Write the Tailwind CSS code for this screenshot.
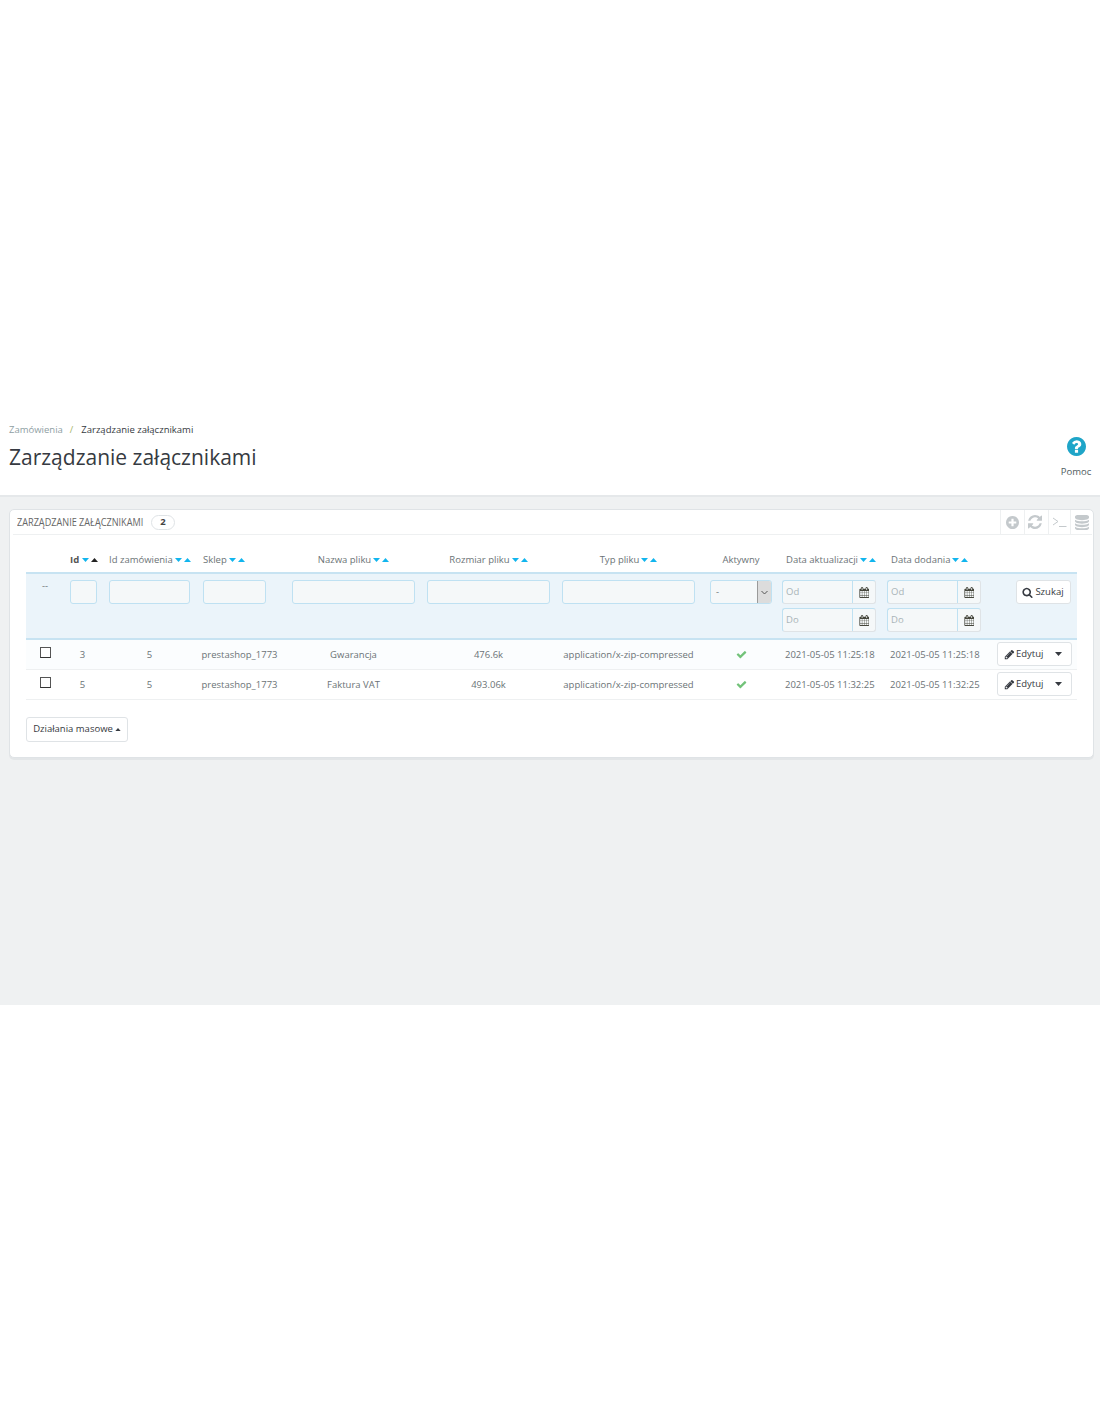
<!DOCTYPE html>
<html lang="pl">
<head>
  <meta charset="UTF-8" />
  <title>Zarządzanie załącznikami</title>
  <script src="https://cdn.jsdelivr.net/npm/@tailwindcss/browser@4"></script>
</head>
<body class="bg-white font-['Open_Sans',sans-serif] text-[9.5px] text-[#6b7376]">
  <svg class="hidden">
    <defs>
      <symbol id="calendar" viewBox="0 0 1664 1792"><path d="M192 1664h288v-288h-288v288zm352 0h320v-288h-320v288zm-352-352h288v-320h-288v320zm352 0h320v-320h-320v320zm-352-384h288v-288h-288v288zm736 736h320v-288h-320v288zm-384-736h320v-288h-320v288zm768 736h288v-288h-288v288zm-384-352h320v-320h-320v320zm-352-864v-288q0-13-9.5-22.5t-22.5-9.5h-64q-13 0-22.5 9.5t-9.5 22.5v288q0 13 9.5 22.5t22.5 9.5h64q13 0 22.5-9.5t9.5-22.5zm736 864h288v-320h-288v320zm-384-384h320v-288h-320v288zm384 0h288v-288h-288v288zm32-480v-288q0-13-9.5-22.5t-22.5-9.5h-64q-13 0-22.5 9.5t-9.5 22.5v288q0 13 9.5 22.5t22.5 9.5h64q13 0 22.5-9.5t9.5-22.5zm384-64v1280q0 52-38 90t-90 38h-1408q-52 0-90-38t-38-90v-1280q0-52 38-90t90-38h128v-96q0-66 47-113t113-47h64q66 0 113 47t47 113v96h384v-96q0-66 47-113t113-47h64q66 0 113 47t47 113v96h128q52 0 90 38t38 90z"/></symbol>
      <symbol id="check" viewBox="0 0 1792 1792"><path d="M1671 566q0 40-28 68l-724 724-136 136q-28 28-68 28t-68-28l-136-136-362-362q-28-28-28-68t28-68l136-136q28-28 68-28t68 28l294 295 656-657q28-28 68-28t68 28l136 136q28 28 28 68z"/></symbol>
      <symbol id="pencil" viewBox="0 0 1792 1792"><path d="M491 1536l91-91-235-235-91 91v107h128v128h107zm523-928q0-22-22-22-10 0-17 7l-542 542q-7 7-7 17 0 22 22 22 10 0 17-7l542-542q7-7 7-17zm-54-192l416 416-832 832h-416v-416zm683 96q0 53-37 90l-166 166-416-416 166-165q36-38 90-38 53 0 91 38l235 234q37 39 37 91z"/></symbol>
    </defs>
  </svg>

  <!-- naglowek strony -->
  <div class="h-[495px] flex flex-col justify-end">
    <div class="h-[80px] pl-[9px] pr-[8px] flex justify-between relative">
      <div>
        <div class="flex items-center h-[14px] mt-[8px] text-[#8e9ea3] leading-none">
          <span>Zamówienia</span>
          <span class="ml-[7px] mr-[8px] text-[#a4b56c]">/</span>
          <span class="text-[#363a41]">Zarządzanie załącznikami</span>
        </div>
        <h1 class="mt-[5px] text-[21px] leading-[30px] text-[#363a41]">Zarządzanie załącznikami</h1>
      </div>
      <div class="flex flex-col items-center mt-[22px] w-[32px]">
        <svg class="w-[19px] h-[19px] fill-[#1fa5c8]" viewBox="128 128 1536 1536"><path d="M1024 1376v-192q0-14-9-23t-23-9h-192q-14 0-23 9t-9 23v192q0 14 9 23t23 9h192q14 0 23-9t9-23zm256-672q0-88-55.5-163t-138.5-116-170-41q-243 0-371 213-15 24 8 42l132 100q7 6 19 6 16 0 25-12 53-68 86-92 34-24 86-24 48 0 85.5 26t37.5 59q0 38-20 61t-68 45q-63 28-115.5 86.5t-52.5 125.5v36q0 14 9 23t23 9h192q14 0 23-9t9-23q0-19 21.5-49.5t54.5-49.5q32-18 49-28.5t46-35 44.5-48 28-60.5 12.5-81zm384 192q0 209-103 385.5t-279.5 279.5-385.5 103-385.5-103-279.5-279.5-103-385.5 103-385.5 279.5-279.5 385.5-103 385.5 103 279.5 279.5 103 385.5z"/></svg>
        <span class="mt-[9px] leading-[14px] text-[#505c60]">Pomoc</span>
      </div>
    </div>
  </div>

  <!-- szara czesc -->
  <div class="h-[510px] bg-[#eff1f2] border-t-2 border-[#e5e8ea] pt-[12px] pl-[9px] pr-[6px]">
    <div class="h-[249px] bg-white border border-[#dfe3e6] rounded-[5px] shadow-[0_2px_0_#e3e6e8]">
      <!-- panel heading -->
      <div class="ml-[3px] mr-[1px] h-[25px] border-b border-[#eef0f1] flex items-center justify-between">
        <div class="flex items-center pl-[4px]">
          <span class="block w-[127px] origin-left scale-x-[.83] whitespace-nowrap text-[11px] text-[#666]">ZARZĄDZANIE ZAŁĄCZNIKAMI</span>
          <span class="ml-[7px] w-[24px] h-[15px] rounded-full border border-[#dfe3e6] flex items-center justify-center font-bold text-[#444]">2</span>
        </div>
        <div class="flex h-full">
          <div class="w-[24px] pr-[1px] border-l border-[#eef0f1] flex items-center justify-center">
            <svg class="w-[13px] h-[13px] fill-[#c4c9cc]" viewBox="128 128 1536 1536"><path d="M1344 960v-128q0-26-19-45t-45-19h-256v-256q0-26-19-45t-45-19h-128q-26 0-45 19t-19 45v256h-256q-26 0-45 19t-19 45v128q0 26 19 45t45 19h256v256q0 26 19 45t45 19h128q26 0 45-19t19-45v-256h256q26 0 45-19t19-45zm320-64q0 209-103 385.5t-279.5 279.5-385.5 103-385.5-103-279.5-279.5-103-385.5 103-385.5 279.5-279.5 385.5-103 385.5 103 279.5 279.5 103 385.5z"/></svg>
          </div>
          <div class="w-[24px] pr-[3px] border-l border-[#eef0f1] flex items-center justify-center">
            <svg class="w-[14px] h-[14px] fill-[#c4c9cc]" viewBox="128 128 1536 1536"><path d="M1639 1056q0 5-1 7-64 268-268 434.5t-478 166.5q-146 0-282.5-55t-243.5-157l-129 129q-19 19-45 19t-45-19-19-45v-448q0-26 19-45t45-19h448q26 0 45 19t19 45-19 45l-137 137q71 66 161 102t187 36q134 0 250-65t186-179q11-17 53-117 8-23 30-23h192q13 0 22.5 9.5t9.5 22.5zm25-800v448q0 26-19 45t-45 19h-448q-26 0-45-19t-19-45 19-45l138-138q-148-137-349-137-134 0-250 65t-186 179q-11 17-53 117-8 23-30 23h-199q-13 0-22.5-9.5t-9.5-22.5v-7q65-268 270-434.5t480-166.5q146 0 284 55.5t245 156.5l130-129q19-19 45-19t45 19 19 45z"/></svg>
          </div>
          <div class="w-[22px] border-l border-[#eef0f1] flex items-center justify-center">
            <svg class="w-[15px] h-[12px] fill-none stroke-[#c4c9cc]" viewBox="0 0 15 12"><path d="M1 2l5 3.5L1 9M7 10.5h7.5" stroke-width="1"/></svg>
          </div>
          <div class="w-[22px] border-l border-[#eef0f1] flex items-center justify-center">
            <svg class="w-[14px] h-[15px] fill-[#c4c9cc]" viewBox="128 128 1536 1536"><path d="M896 768q237 0 443-43t325-127v170q0 69-103 128t-280 93.5-385 34.5-385-34.5-280-93.5-103-128v-170q119 84 325 127t443 43zm0 768q237 0 443-43t325-127v170q0 69-103 128t-280 93.5-385 34.5-385-34.5-280-93.5-103-128v-170q119 84 325 127t443 43zm0-384q237 0 443-43t325-127v170q0 69-103 128t-280 93.5-385 34.5-385-34.5-280-93.5-103-128v-170q119 84 325 127t443 43zm0-1152q208 0 385 34.5t280 93.5 103 128v128q0 69-103 128t-280 93.5-385 34.5-385-34.5-280-93.5-103-128v-128q0-69 103-128t280-93.5 385-34.5z"/></svg>
          </div>
        </div>
      </div>

      <!-- tabela -->
      <div class="pl-[16px] pr-[15px] pt-[11px]">
        <table class="table-fixed w-[1051px] border-collapse">
          <colgroup>
            <col class="w-[38px]"><col class="w-[39px]"><col class="w-[93px]"><col class="w-[87px]"><col class="w-[141px]"><col class="w-[129px]"><col class="w-[151px]"><col class="w-[74px]"><col class="w-[105px]"><col class="w-[105px]"><col class="w-[89px]">
          </colgroup>
          <thead>
            <tr class="h-[27px] [&>th]:pt-[2px]">
              <th></th>
              <th class="font-normal text-left pl-[6px]"><span class="inline-flex items-center gap-[2px] font-bold text-[#555]">Id
                <svg class="ml-[1px] w-[7px] h-[4px] fill-[#11b5ee]" viewBox="0 0 7 4"><path d="M0 0h7L3.5 4z"/></svg><svg class="w-[7px] h-[4px] fill-[#222]" viewBox="0 0 7 4"><path d="M0 4h7L3.5 0z"/></svg></span></th>
              <th class="font-normal text-left pl-[6px]"><span class="inline-flex items-center gap-[2px]">Id zamówienia
                <svg class="w-[7px] h-[4px] fill-[#11b5ee]" viewBox="0 0 7 4"><path d="M0 0h7L3.5 4z"/></svg><svg class="w-[7px] h-[4px] fill-[#11b5ee]" viewBox="0 0 7 4"><path d="M0 4h7L3.5 0z"/></svg></span></th>
              <th class="font-normal text-left pl-[7px]"><span class="inline-flex items-center gap-[2px]">Sklep
                <svg class="w-[7px] h-[4px] fill-[#11b5ee]" viewBox="0 0 7 4"><path d="M0 0h7L3.5 4z"/></svg><svg class="w-[7px] h-[4px] fill-[#11b5ee]" viewBox="0 0 7 4"><path d="M0 4h7L3.5 0z"/></svg></span></th>
              <th class="font-normal text-center"><span class="inline-flex items-center gap-[2px]">Nazwa pliku
                <svg class="w-[7px] h-[4px] fill-[#11b5ee]" viewBox="0 0 7 4"><path d="M0 0h7L3.5 4z"/></svg><svg class="w-[7px] h-[4px] fill-[#11b5ee]" viewBox="0 0 7 4"><path d="M0 4h7L3.5 0z"/></svg></span></th>
              <th class="font-normal text-center"><span class="inline-flex items-center gap-[2px]">Rozmiar pliku
                <svg class="w-[7px] h-[4px] fill-[#11b5ee]" viewBox="0 0 7 4"><path d="M0 0h7L3.5 4z"/></svg><svg class="w-[7px] h-[4px] fill-[#11b5ee]" viewBox="0 0 7 4"><path d="M0 4h7L3.5 0z"/></svg></span></th>
              <th class="font-normal text-center"><span class="inline-flex items-center gap-[2px]">Typ pliku
                <svg class="w-[7px] h-[4px] fill-[#11b5ee]" viewBox="0 0 7 4"><path d="M0 0h7L3.5 4z"/></svg><svg class="w-[7px] h-[4px] fill-[#11b5ee]" viewBox="0 0 7 4"><path d="M0 4h7L3.5 0z"/></svg></span></th>
              <th class="font-normal text-center">Aktywny</th>
              <th class="font-normal text-left pl-[8px]"><span class="inline-flex items-center gap-[2px]">Data aktualizacji
                <svg class="w-[7px] h-[4px] fill-[#11b5ee]" viewBox="0 0 7 4"><path d="M0 0h7L3.5 4z"/></svg><svg class="w-[7px] h-[4px] fill-[#11b5ee]" viewBox="0 0 7 4"><path d="M0 4h7L3.5 0z"/></svg></span></th>
              <th class="font-normal text-left pl-[8px]"><span class="inline-flex items-center gap-[2px]">Data dodania
                <svg class="w-[7px] h-[4px] fill-[#11b5ee]" viewBox="0 0 7 4"><path d="M0 0h7L3.5 4z"/></svg><svg class="w-[7px] h-[4px] fill-[#11b5ee]" viewBox="0 0 7 4"><path d="M0 4h7L3.5 0z"/></svg></span></th>
              <th></th>
            </tr>
            <tr class="h-[66px] bg-[#ebf4fa] border-y-2 border-[#c7e3f2] align-top">
              <th class="pt-[5px] font-normal text-center leading-[14px]">--</th>
              <th class="pt-[6px] pl-[6px]"><div class="w-[27px] h-[24px] bg-[#f5f8f9] border border-[#bfe1f2] rounded-[3px]"></div></th>
              <th class="pt-[6px] pl-[6px]"><div class="w-[81px] h-[24px] bg-[#f5f8f9] border border-[#bfe1f2] rounded-[3px]"></div></th>
              <th class="pt-[6px] pl-[7px]"><div class="w-[63px] h-[24px] bg-[#f5f8f9] border border-[#bfe1f2] rounded-[3px]"></div></th>
              <th class="pt-[6px] pl-[9px]"><div class="w-[123px] h-[24px] bg-[#f5f8f9] border border-[#bfe1f2] rounded-[3px]"></div></th>
              <th class="pt-[6px] pl-[3px]"><div class="w-[123px] h-[24px] bg-[#f5f8f9] border border-[#bfe1f2] rounded-[3px]"></div></th>
              <th class="pt-[6px] pl-[9px]"><div class="w-[133px] h-[24px] bg-[#f5f8f9] border border-[#bfe1f2] rounded-[3px]"></div></th>
              <th class="pt-[6px] pl-[6px]">
                <div class="w-[62px] h-[24px] bg-[#f5f8f9] border border-[#bfe1f2] rounded-[3px] flex justify-between overflow-hidden font-normal">
                  <span class="pl-[5px] leading-[22px]">-</span>
                  <span class="w-[14px] bg-[#dcdcdc] border-l border-[#9a9a9a] flex items-center justify-center">
                    <svg class="w-[7px] h-[5px] fill-none stroke-[#555]" viewBox="0 0 7 5"><path d="M.5 1l3 3 3-3"/></svg>
                  </span>
                </div>
              </th>
              <th class="pt-[6px] pl-[4px] font-normal">
                <div class="w-[94px] h-[24px] bg-[#f5f8f9] border border-[#bfe1f2] border-r-[#dfe3e6] border-b-[#dfe3e6] rounded-[3px] flex items-center">
                  <span class="flex-1 pl-[3px] pt-[1px] text-left text-[#a9b4b8]">Od</span>
                  <span class="w-[23px] h-full border-l border-[#bfe1f2] flex items-center justify-center"><svg class="w-[10px] h-[11px] fill-[#45463c]"><use href="#calendar"/></svg></span>
                </div>
                <div class="mt-[4px] w-[94px] h-[24px] bg-[#f5f8f9] border border-[#bfe1f2] border-r-[#dfe3e6] border-b-[#dfe3e6] rounded-[3px] flex items-center">
                  <span class="flex-1 pl-[3px] pt-[1px] text-left text-[#a9b4b8]">Do</span>
                  <span class="w-[23px] h-full border-l border-[#bfe1f2] flex items-center justify-center"><svg class="w-[10px] h-[11px] fill-[#45463c]"><use href="#calendar"/></svg></span>
                </div>
              </th>
              <th class="pt-[6px] pl-[4px] font-normal">
                <div class="w-[94px] h-[24px] bg-[#f5f8f9] border border-[#bfe1f2] border-r-[#dfe3e6] border-b-[#dfe3e6] rounded-[3px] flex items-center">
                  <span class="flex-1 pl-[3px] pt-[1px] text-left text-[#a9b4b8]">Od</span>
                  <span class="w-[23px] h-full border-l border-[#bfe1f2] flex items-center justify-center"><svg class="w-[10px] h-[11px] fill-[#45463c]"><use href="#calendar"/></svg></span>
                </div>
                <div class="mt-[4px] w-[94px] h-[24px] bg-[#f5f8f9] border border-[#bfe1f2] border-r-[#dfe3e6] border-b-[#dfe3e6] rounded-[3px] flex items-center">
                  <span class="flex-1 pl-[3px] pt-[1px] text-left text-[#a9b4b8]">Do</span>
                  <span class="w-[23px] h-full border-l border-[#bfe1f2] flex items-center justify-center"><svg class="w-[10px] h-[11px] fill-[#45463c]"><use href="#calendar"/></svg></span>
                </div>
              </th>
              <th class="pt-[6px] pl-[28px] font-normal">
                <div class="w-[55px] h-[24px] bg-white border border-[#dfe3e6] rounded-[3px] flex items-center justify-center gap-[2px] pr-[1px] text-[#363a41]">
                  <svg class="w-[11px] h-[11px] fill-[#363a41]" viewBox="0 0 1792 1792"><path d="M1216 832q0-185-131.5-316.5t-316.5-131.5-316.5 131.5-131.5 316.5 131.5 316.5 316.5 131.5 316.5-131.5 131.5-316.5zm512 832q0 52-38 90t-90 38q-54 0-90-38l-343-342q-179 124-399 124-143 0-273.5-55.5t-225-150-150-225-55.5-273.5 55.5-273.5 150-225 225-150 273.5-55.5 273.5 55.5 225 150 150 225 55.5 273.5q0 220-124 399l343 343q37 37 37 90z"/></svg>
                  Szukaj
                </div>
              </th>
            </tr>
          </thead>
          <tbody>
            <tr class="h-[30px] bg-[#fbfdfe] border-b border-[#eef0f1]">
              <td class="pl-[14px]"><div class="w-[11px] h-[11px] mb-[3px] bg-white border border-[#555] border-b-[#333]"></div></td>
              <td class="pt-[2px] text-center pr-[2px]">3</td>
              <td class="pt-[2px] text-center">5</td>
              <td class="pt-[2px] text-center whitespace-nowrap">prestashop_1773</td>
              <td class="pt-[2px] text-center">Gwarancja</td>
              <td class="pt-[2px] text-center">476.6k</td>
              <td class="pt-[2px] text-center whitespace-nowrap">application/x-zip-compressed</td>
              <td><svg class="w-[11px] h-[11px] mx-auto mt-[1px] fill-[#72c279]"><use href="#check"/></svg></td>
              <td class="pt-[2px] pl-[7px] whitespace-nowrap">2021-05-05 11:25:18</td>
              <td class="pt-[2px] pl-[7px] whitespace-nowrap">2021-05-05 11:25:18</td>
              <td class="pl-[9px]">
                <div class="w-[75px] h-[24px] bg-white border border-[#dfe3e6] rounded-[3px] flex items-center pl-[6px] text-[#363a41]">
                  <svg class="w-[11px] h-[11px] fill-[#363a41] mr-[1px]"><use href="#pencil"/></svg>Edytuj
                  <svg class="ml-[12px] w-[7px] h-[4px] fill-[#363a41]" viewBox="0 0 7 4"><path d="M0 0h7L3.5 4z"/></svg>
                </div>
              </td>
            </tr>
            <tr class="h-[30px] bg-white border-b border-[#eef0f1]">
              <td class="pl-[14px]"><div class="w-[11px] h-[11px] mb-[3px] bg-white border border-[#555] border-b-[#333]"></div></td>
              <td class="pt-[2px] text-center pr-[2px]">5</td>
              <td class="pt-[2px] text-center">5</td>
              <td class="pt-[2px] text-center whitespace-nowrap">prestashop_1773</td>
              <td class="pt-[2px] text-center">Faktura VAT</td>
              <td class="pt-[2px] text-center">493.06k</td>
              <td class="pt-[2px] text-center whitespace-nowrap">application/x-zip-compressed</td>
              <td><svg class="w-[11px] h-[11px] mx-auto mt-[1px] fill-[#72c279]"><use href="#check"/></svg></td>
              <td class="pt-[2px] pl-[7px] whitespace-nowrap">2021-05-05 11:32:25</td>
              <td class="pt-[2px] pl-[7px] whitespace-nowrap">2021-05-05 11:32:25</td>
              <td class="pl-[9px]">
                <div class="w-[75px] h-[24px] bg-white border border-[#dfe3e6] rounded-[3px] flex items-center pl-[6px] text-[#363a41]">
                  <svg class="w-[11px] h-[11px] fill-[#363a41] mr-[1px]"><use href="#pencil"/></svg>Edytuj
                  <svg class="ml-[12px] w-[7px] h-[4px] fill-[#363a41]" viewBox="0 0 7 4"><path d="M0 0h7L3.5 4z"/></svg>
                </div>
              </td>
            </tr>
          </tbody>
        </table>

        <div class="mt-[17px] w-[102px] h-[25px] pt-[1px] bg-white border border-[#dfe3e6] rounded-[3px] flex items-center justify-center gap-[2px] text-[#363a41]">
          Działania masowe
          <svg class="w-[6px] h-[3px] fill-[#363a41]" viewBox="0 0 7 4"><path d="M0 4h7L3.5 0z"/></svg>
        </div>
      </div>
    </div>
  </div>
</body>
</html>
